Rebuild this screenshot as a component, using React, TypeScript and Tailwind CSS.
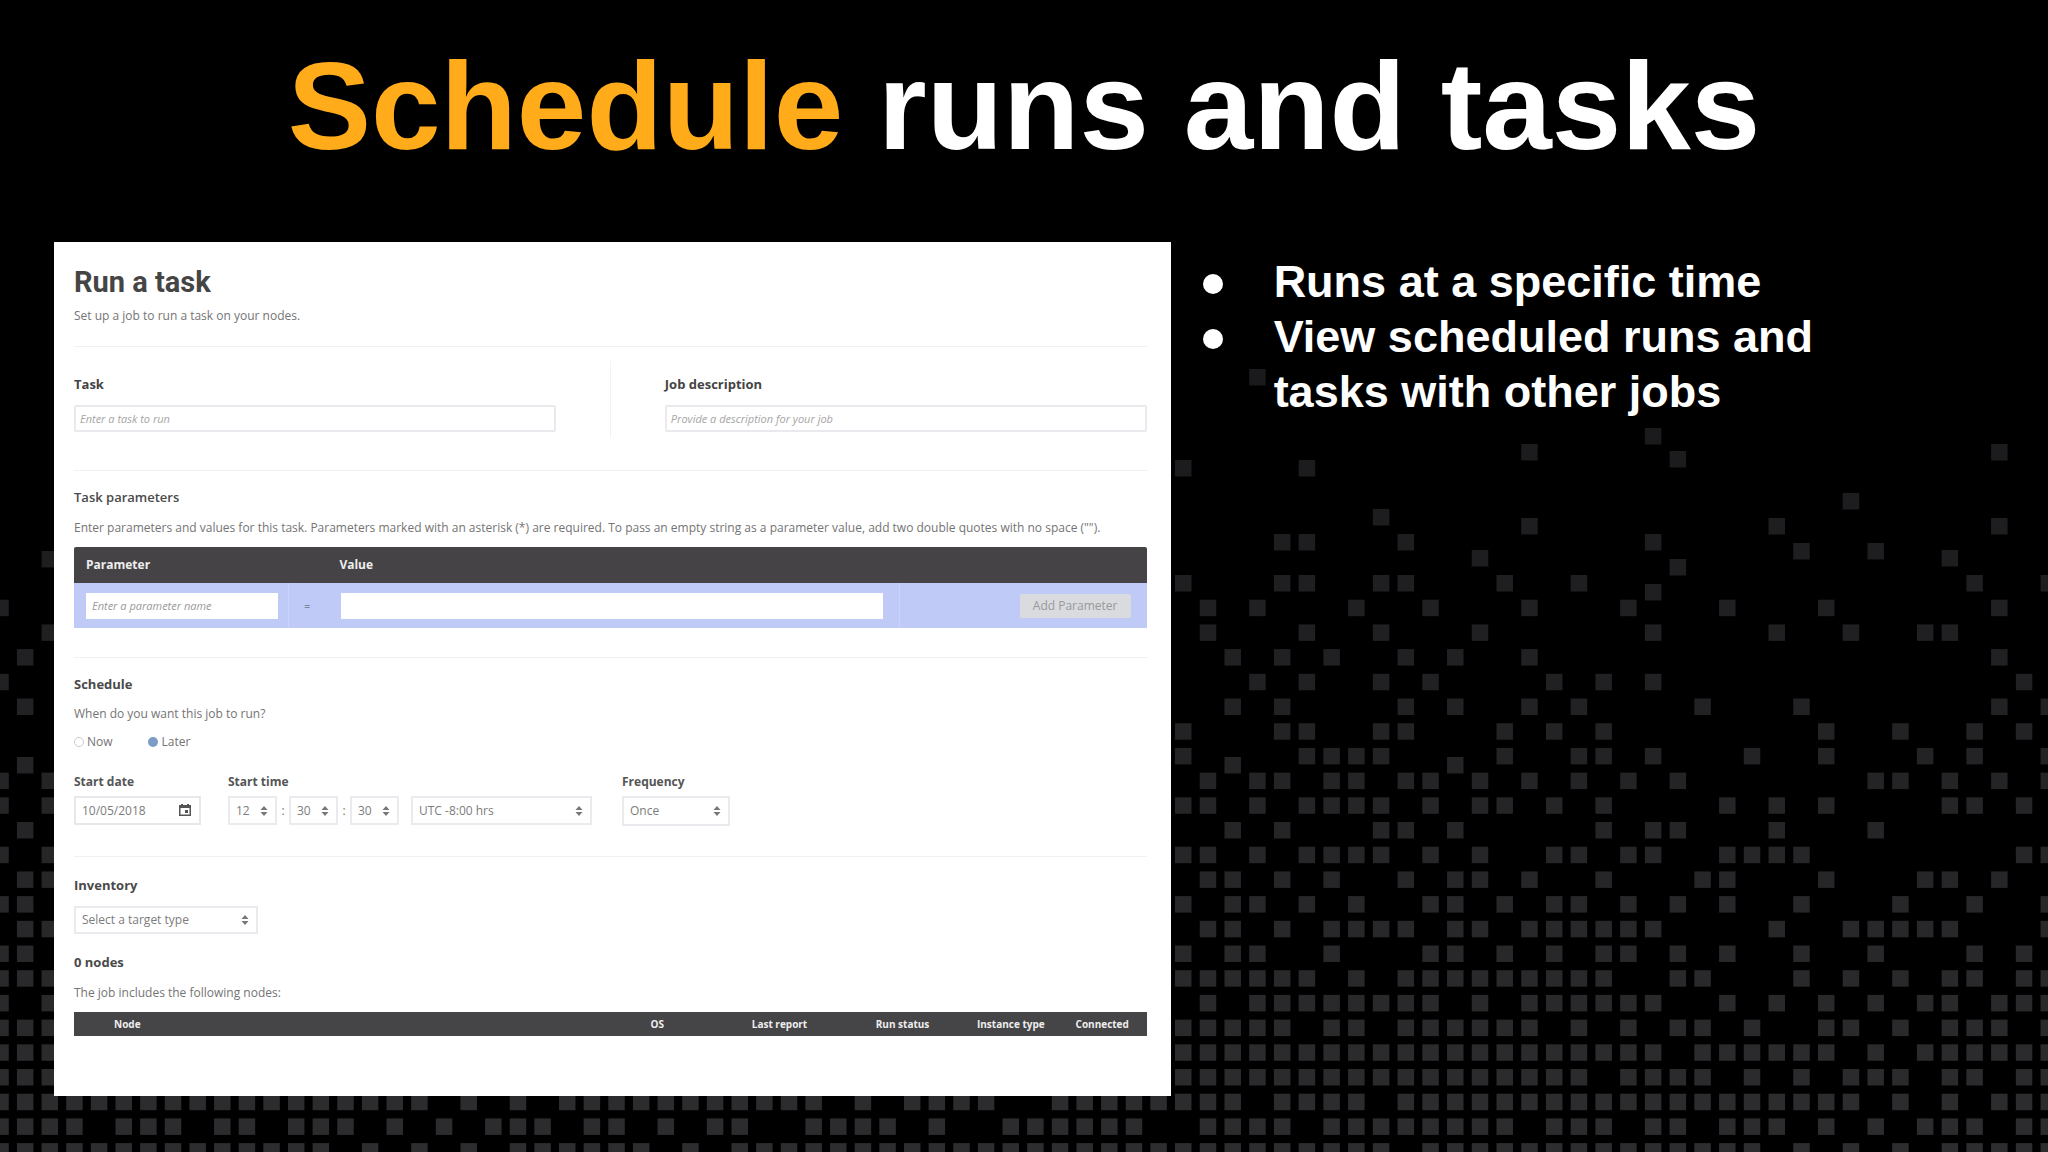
import type { ReactNode } from "react";

const span = (from: number, to: number) => Array.from({ length: to - from + 1 }, (_, i) => from + i);

// Lit columns of every background row, counted from column 0 (x = 1175)
const rows: number[][] = [
    [0, 4, 5, 8, 9, 13, 16, 32, 35],
    [-48, 1, 3, 7, 10, 14, 18, 22, 26, 33],
    [-46, 1, 5, 8, 12, 19, 24, 27, 30, 31],
    [-47, 2, 4, 6, 9, 11, 14, 33],
    [-48, 3, 5, 8, 10, 15, 17, 19, 34],
    [-47, 2, 4, 9, 11, 14, 16, 21, 25, 33, 35],
    [0, 4, 5, 8, 9, 13, 15, 17, 26, 29, 32, 34],
    [0, 5, 6, 7, 8, 13, 16, 17, 19, 23, 26, 30, 32, 35],
    [-48, -46, 1, 3, 4, 6, 7, 9, 10, 12, 14, 16, 18, 20, 28, 29, 31, 33, 35],
    [-48, -46, 0, 1, 3, 5, 6, 7, 8, 10, 12, 13, 15, 17, 22, 24, 26, 31, 32, 34],
    [-47, 2, 4, 8, 9, 11, 17, 19, 20, 24, 28],
    [-48, -46, 0, 1, 3, 5, 6, 7, 8, 10, 12, 15, 16, 18, 19, 22, 23, 24, 25, 34, 35],
    [-47, -46, 1, 2, 4, 6, 9, 11, 12, 14, 17, 21, 22, 26, 30, 31, 33],
    [-48, -47, 0, 2, 3, 5, 7, 10, 11, 13, 15, 16, 18, 20, 22, 25, 29, 32, 35],
    [-47, -46, 1, 2, 4, 6, 7, 8, 9, 11, 12, 14, 15, 16, 17, 18, 19, 24, 27, 28, 29, 30, 31, 35],
    [-48, -47, 0, 2, 3, 6, 10, 11, 13, 15, 17, 18, 20, 22, 25, 28, 32, 34],
    [-48, -47, -46, ...span(0, 5), 7, ...span(9, 17), 20, 21, 25, 27, 29, 31, 32, 34, 35],
    [-48, -46, 1, ...span(3, 10), 12, ...span(14, 19), 22, 24, 26, 28, 30, 31, 33, 34, 35],
    [-48, -47, -46, ...span(0, 4), 6, 7, ...span(9, 14), 16, 18, 20, 21, 23, 26, 27, 29, 31, 32, 33, 35],
    [-48, -47, -46, ...span(0, 19), ...span(21, 26), 28, ...span(30, 35)],
    [-48, -47, -46, ...span(0, 16), ...span(18, 21), 23, 25, 27, 28, 29, 31, 32, 34, 35],
    [...span(-48, -31), -29, -27, ...span(-25, -15), -13, ...span(-11, -8), ...span(-5, 2), 4, 5, 6, 7, ...span(9, 27), 29, 31, 33, 34, 35],
    [-48, -47, -46, -45, -43, -42, -41, -39, -38, -36, -35, -34, -32, -30, -28, -27, -26, -24, -23, -21, -19, -18, -15, -14, -13, -12, -10, ...span(-7, -2), ...span(1, 4), ...span(6, 13), 15, 16, 17, 19, 20, 22, 23, 24, 26, 28, 30, 31, 32, 34, 35],
    [...span(-48, -35), -33, -31, -29, ...span(-27, -22), -20, ...span(-18, 8), ...span(10, 23), 25, 27, 29, ...span(31, 35)],
];

// Squares that do not sit on the regular rows: [column, y]
const loose: [number, number][] = [
    [3, 369], [19, 428], [14, 444], [33, 444], [20, 451], [0, 460], [5, 460], [27, 493],
    [8, 509], [14, 518], [24, 518], [33, 518], [4, 534], [5, 534], [9, 534], [19, 534],
    [25, 543], [28, 543], [12, 550], [31, 550], [-46, 551], [20, 559], [19, 584],
    [2, 757], [11, 757], [-47, 757],
];

const squares: [number, number][] = [
    ...loose,
    ...rows.flatMap((cols, r) => cols.map((c): [number, number] => [c, 575 + r * 24.7])),
];

const Backdrop = () => {
    return (
        <svg className="absolute inset-0 h-full w-full" viewBox="0 0 2048 1152" preserveAspectRatio="xMidYMax slice" aria-hidden="true">
            {squares.map(([c, y], i) => {
                const tone = Math.round(26 + ((y - 369) / 774) * 19);
                return (
                    <rect key={i} x={1175 + c * (c < 0 ? 24.64 : 24.73)} y={y} width="16.5" height="16.5" fill={`rgb(${tone},${tone - 1},${tone + 1})`} />
                );
            })}
        </svg>
    );
};

const Sorter = () => {
    return (
        <svg className="pointer-events-none absolute top-1/2 right-[9px] h-[10px] w-2 -translate-y-1/2" viewBox="0 0 8 10" fill="#777" aria-hidden="true">
            <path d="M4 0 7.5 4H.5zM4 10 .5 6h7z" />
        </svg>
    );
};

const Select = ({ label, className, options }: { label: string; className: string; options: string[] }) => {
    return (
        <div className={`relative ${className}`}>
            <select aria-label={label} className="h-full w-full appearance-none border-2 border-[#ebeaee] bg-white pl-[6px] text-[12px] text-[#7c7c7c]">
                {options.map((o) => <option key={o}>{o}</option>)}
            </select>
            <Sorter />
        </div>
    );
};

const Title = ({ className, children }: { className: string; children: ReactNode }) => {
    return <h3 className={`text-[13px] leading-4 text-[#4a4a4a] ${className}`}>{children}</h3>;
};

const Line = ({ className }: { className: string }) => {
    return <hr className={`border-t border-[#f0eff3] ${className}`} />;
};

const TaskForm = () => {
    return (
        <form className="bg-white pt-6 pr-6 pb-[60px] pl-5 font-['Open_Sans','Noto_Sans',sans-serif] text-[12px] leading-4 text-[#747474]">

            {/* Heading */}
            <h2 className="font-['Roboto',sans-serif] text-[29px] leading-8 font-bold text-[#454545]">Run a task</h2>
            <p className="mt-[10px]">Set up a job to run a task on your nodes.</p>
            <Line className="mt-[22px]" />

            {/* Task + description */}
            <div className="mt-[14px] grid grid-cols-[1fr_1px_1fr] gap-x-[54px]">
                <div className="pt-[15px] pb-[6px]">
                    <label htmlFor="task" className="block text-[13px] font-bold text-[#444]">Task</label>
                    <input id="task" placeholder="Enter a task to run" className="mt-[13px] block h-[27px] w-full rounded-xs border-2 border-[#ebe9ed] px-1 text-[11px] placeholder:text-[#a5a5a5] placeholder:italic" />
                </div>
                <div className="bg-[#f3f2f5]"></div>
                <div className="pt-[15px] pb-[6px]">
                    <label htmlFor="description" className="block text-[13px] font-bold text-[#444]">Job description</label>
                    <input id="description" placeholder="Provide a description for your job" className="mt-[13px] block h-[27px] w-full rounded-xs border-2 border-[#ebe9ed] px-1 text-[11px] placeholder:text-[#a5a5a5] placeholder:italic" />
                </div>
            </div>
            <Line className="mt-8" />

            {/* Parameters */}
            <Title className="mt-[18px] font-semibold">Task parameters</Title>
            <p className="mt-[15px]">Enter parameters and values for this task. Parameters marked with an asterisk (*) are required. To pass an empty string as a parameter value, add two double quotes with no space ("").</p>
            <table className="mt-[11px] w-full table-fixed">
                <colgroup>
                    <col className="w-[20%]" />
                    <col className="w-[4%]" />
                    <col className="w-[53%]" />
                    <col className="w-[23%]" />
                </colgroup>
                <thead>
                    <tr className="h-9 bg-[#454345] text-left text-[12px] font-bold text-[#eee]">
                        <th className="rounded-tl-xs pl-3">Parameter</th>
                        <th></th>
                        <th className="pl-2">Value</th>
                        <th className="rounded-tr-xs"></th>
                    </tr>
                </thead>
                <tbody>
                    <tr className="h-[45px] bg-[#bfcbf6]">
                        <td className="pr-[10px] pl-3">
                            <input aria-label="Parameter name" placeholder="Enter a parameter name" className="block h-[26px] w-full bg-white px-[6px] text-[11px] placeholder:text-[#999] placeholder:italic" />
                        </td>
                        <td className="border-l border-[#ccd5f9] pr-[6px] text-center text-[11px] text-[#4c4c66]">=</td>
                        <td className="pr-4 pl-[10px]">
                            <input aria-label="Parameter value" className="block h-[26px] w-full bg-white px-[6px]" />
                        </td>
                        <td className="border-l border-[#ccd5f9] pr-4 text-right">
                            <button type="button" className="h-6 w-[111px] rounded-xs bg-[#dadbdf] text-[12px] text-[#999]">Add Parameter</button>
                        </td>
                    </tr>
                </tbody>
            </table>
            <Line className="mt-[29px]" />

            {/* Schedule */}
            <Title className="mt-[18px] font-bold">Schedule</Title>
            <p className="mt-[14px]">When do you want this job to run?</p>
            <div className="mt-3 flex gap-[35px]">
                <label className="flex items-center gap-[3px]">
                    <input type="radio" name="when" className="size-[10px] appearance-none rounded-full border border-[#ccc]" />Now
                </label>
                <label className="flex items-center gap-1">
                    <input type="radio" name="when" defaultChecked className="size-[10px] appearance-none rounded-full bg-[#7b9cc4]" />Later
                </label>
            </div>
            <div className="mt-6 flex">
                <div>
                    <label htmlFor="date" className="block font-bold text-[#555]">Start date</label>
                    <div className="relative mt-[6px] h-[29px] w-[127px]">
                        <input id="date" defaultValue="10/05/2018" className="h-full w-full border-2 border-[#e8e7eb] px-[6px] text-[12px] text-[#7c7c7c]" />
                        <svg className="absolute top-2 right-[10px] h-3 w-3" viewBox="0 0 12 12" aria-hidden="true">
                            <path fill="#555" fillRule="evenodd" d="M2 0h2v1h4V0h2v1h2v11H0V1h2zM1.500 4v6.500h9V4zM6 6h3v3H6z" />
                        </svg>
                    </div>
                </div>
                <div className="ml-[27px]">
                    <div className="font-bold text-[#555]">Start time</div>
                    <div className="mt-[6px] flex h-[29px] items-center">
                        <Select label="Hours" className="h-full w-[49px]" options={["12"]} />
                        <span className="w-3 text-center">:</span>
                        <Select label="Minutes" className="h-full w-[49px]" options={["30"]} />
                        <span className="w-3 text-center">:</span>
                        <Select label="Seconds" className="h-full w-[49px]" options={["30"]} />
                        <Select label="Time zone" className="ml-3 h-full w-[181px]" options={["UTC -8:00 hrs"]} />
                    </div>
                </div>
                <div className="ml-[30px]">
                    <div className="font-bold text-[#555]">Frequency</div>
                    <Select label="Frequency" className="mt-[6px] h-[30px] w-[108px]" options={["Once"]} />
                </div>
            </div>
            <Line className="mt-[30px]" />

            {/* Inventory */}
            <Title className="mt-5 font-bold">Inventory</Title>
            <Select label="Target type" className="mt-[13px] h-[28px] w-[184px]" options={["Select a target type"]} />
            <Title className="mt-5 font-bold">0 nodes</Title>
            <p className="mt-[15px]">The job includes the following nodes:</p>
            <table className="mt-[11px] w-full table-fixed">
                <colgroup>
                    <col className="w-[53%]" />
                    <col className="w-[10%]" />
                    <col className="w-[11%]" />
                    <col className="w-[10%]" />
                    <col className="w-[9%]" />
                    <col className="w-[7%]" />
                </colgroup>
                <thead>
                    <tr className="h-6 bg-[#454446] text-left text-[10px] font-bold whitespace-nowrap text-[#eee]">
                        <th className="pl-10">Node</th>
                        <th className="pl-2">OS</th>
                        <th className="pl-[2px]">Last report</th>
                        <th className="pl-2">Run status</th>
                        <th className="pl-[2px]">Instance type</th>
                        <th className="pl-1">Connected</th>
                    </tr>
                </thead>
            </table>

        </form>
    );
};

const App = () => {
    return (
        <div className="relative min-h-screen overflow-hidden bg-black font-['Liberation_Sans',Arial,sans-serif]">
            <Backdrop />

            <main className="relative pb-14">
                <h1 className="pt-[34px] text-center text-[125px] leading-[144px] font-bold text-white">
                    <span className="text-[#ffab1a]">Schedule</span> runs and tasks
                </h1>

                <div className="mt-16 grid grid-cols-[56%_1fr] pl-[54px]">
                    <TaskForm />
                    <ul className="pt-3 pr-[200px] pl-8 text-[45px] leading-[55px] font-bold text-white">
                        <li className="flex gap-[51px]">
                            <span className="mt-5 size-5 shrink-0 rounded-full bg-white"></span>
                            Runs at a specific time
                        </li>
                        <li className="flex gap-[51px]">
                            <span className="mt-5 size-5 shrink-0 rounded-full bg-white"></span>
                            View scheduled runs and tasks with other jobs
                        </li>
                    </ul>
                </div>
            </main>
        </div>
    );
};

export default App;
